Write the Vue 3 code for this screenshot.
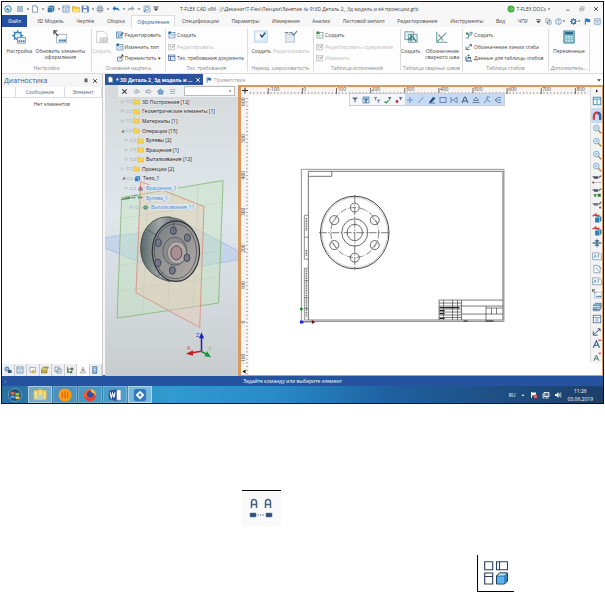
<script setup>
import { h } from 'vue'

const glyphs = {
  logo: '<circle cx="8" cy="8" r="6.5" fill="#fff" stroke="#2d8ac7" stroke-width="2"/><path d="M4 9l3-4 2 3 3-1-3 5z" fill="#2d8ac7"/>',
  menu: '<path d="M2 4h12M2 8h12M2 12h12" stroke="#34618f" stroke-width="1.6"/>',
  page: '<path d="M3 1.5h7l3 3v10H3z" fill="#fff" stroke="#55718f" stroke-width="1.3"/><path d="M10 1.5v3h3" fill="none" stroke="#55718f"/>',
  cube: '<path d="M2 5l3-3h9v9l-3 3H2z" fill="#2f7fb5" stroke="#1d4e78"/><path d="M2 5h9v9M11 5l3-3" fill="none" stroke="#bfe0f5"/>',
  form: '<rect x="2" y="2" width="12" height="12" fill="#fff" stroke="#3a6ea5" stroke-width="1.3"/><path d="M2 5.500h12M5 8h6M5 11h6" stroke="#3a6ea5"/>',
  folder: '<path d="M1 3h5l2 2h7v9H1z" fill="#f5c73d" stroke="#c59a2a"/><path d="M3 8h13l-2 6H1z" fill="#ffe27a"/>',
  tree: '<path d="M1 3h5l2 2h7v9H1z" fill="#f7d24d" stroke="#e0b638"/>',
  save: '<path d="M2 2h11l2 2v10H2z" fill="#6a8ecb" stroke="#35579a"/><path d="M5 2h6v4H5zM4 9h8v5H4z" fill="#fff"/>',
  print: '<path d="M4 2h8v4H4zM2 6h12v5H2zM4 10h8v4H4z" fill="#e8ecef" stroke="#566a80"/>',
  undo: '<path d="M6 2L1 7l5 5V9c4 0 6 0 9 3 0-5-4-7-9-7z" fill="#1f6fb0"/>',
  redo: '<path d="M10 2l5 5-5 5V9c-4 0-6 0-9 3 0-5 4-7 9-7z" fill="#9aa7b5"/>',
  preview: '<path d="M2 2h12v12H2z" fill="#fff" stroke="#56738e"/><circle cx="8" cy="7" r="3.500" fill="none" stroke="#2d78b5" stroke-width="1.5"/><path d="M5 10l-3 4" stroke="#2d78b5" stroke-width="2"/>',
  down: '<path d="M3 6h10l-5 6z" fill="#444"/>',
  more: '<path d="M3 4h10" stroke="#444" stroke-width="2"/><path d="M3 7h10l-5 5z" fill="#444"/>',
  ball: '<circle cx="8" cy="8" r="7" fill="#43ad3b"/><path d="M4 8h8M8 4l4 4-4 4" stroke="#b5e8ad" fill="none"/>',
  min: '<path d="M3 11h9" stroke="#444" stroke-width="2"/>',
  restore: '<path d="M5 2h9v7H5zM2 6h9v7H2z" fill="#fff" stroke="#777" stroke-width="1.3"/>',
  close: '<path d="M3 3l10 10M13 3L3 13" stroke="#333" stroke-width="2.300"/>',
  closeW: '<path d="M3 3l10 10M13 3L3 13" stroke="#fff" stroke-width="2.300"/>',
  help: '<circle cx="8" cy="8" r="6.500" fill="#fff" stroke="#3777b0" stroke-width="1.500"/><path d="M6 6c0-3 5-2 4 0L8 8v2M8 11v2" fill="none" stroke="#3777b0" stroke-width="1.400"/>',
  gear: '<circle cx="8" cy="8" r="4.500" fill="none" stroke="#376fa8" stroke-width="3"/><path d="M8 0v4M8 12v4M0 8h4M12 8h4M2 2l3 3M11 11l3 3M14 2l-3 3M2 14l3-3" stroke="#376fa8" stroke-width="2"/>',
  flag: '<path d="M3 1v14" stroke="#1b5faa" stroke-width="2"/><path d="M4 2c4-2 6 2 10 0v7c-4 2-6-2-10 0z" fill="#2c78c4"/>',
  layers: '<path d="M2 2h8v9H2zM6 6h8v8H6z" fill="#fff" stroke="#56728f" stroke-width="1.300"/>',
  settings: '<circle cx="6.500" cy="6.500" r="4" fill="#dff0fa" stroke="#3586bb" stroke-width="1.800"/><path d="M6.500 0v3M6.500 10v3M0 6.500h3M10 6.500h3M2 2l2 2M9 9l2 2M11 2L9 4M2 11l2-2" stroke="#3586bb" stroke-width="1.300"/><rect x="6" y="8.500" width="9.500" height="6.500" fill="#e6f0f8" stroke="#55738e" stroke-width=".7"/><path d="M7.500 12.800h1.800M10 12.800h1.800M12.500 12.800h1.800" stroke="#444" stroke-width="1.500"/>',
  update: '<path d="M4 5h11.500v9.500H4z" fill="#fff" stroke="#7d94a8" stroke-width=".8"/><path d="M6 10h9v4H6z" fill="#bbdcf0"/><path d="M7 12h1.800M10 12h1.800M12.500 12h1.800" stroke="#345b7c" stroke-width="1.500"/><path d="M1 1l5 6M1 5V1h4" fill="none" stroke="#444" stroke-width="1.200"/>',
  stamp: '<path d="M2 1.500h8l4 4v9H2z" fill="#fff" stroke="#bbb" stroke-width=".8"/><path d="M6 9h8v5H6zM6 11.500h8M10 9v5" fill="#ececec" stroke="#b5b5b5" stroke-width=".8"/>',
  edit: '<rect x="1" y="2" width="11" height="12" fill="#e3eef7" stroke="#3e6e9c" stroke-width="1.300"/><path d="M1 6h11M5 6v8" stroke="#3e6e9c"/><path d="M6 12l2-4 6-6 2 2-6 6z" fill="#3e7ebc"/>',
  move: '<path d="M3 6h9v8H3z" fill="#fff" stroke="#56728f" stroke-width="1.500"/><path d="M7 10l7-8M10 2h4v4" fill="none" stroke="#333" stroke-width="1.500"/>',
  create: '<rect x="2" y="3" width="12" height="11" fill="#fff" stroke="#4777a4" stroke-width="1.300"/><path d="M5 7h8M5 10h8" stroke="#4777a4"/><path d="M1 1h5v5H1z" fill="#2871ad"/>',
  editG: '<rect x="1" y="3" width="12" height="11" fill="#f5f5f5" stroke="#bbb" stroke-width="1.300"/><path d="M1 7h12M5 3v11" stroke="#bbb"/><path d="M8 10l6-7" stroke="#aaa" stroke-width="2"/>',
  doc: '<rect x="1" y="2" width="13" height="11" fill="#dfe9f5" stroke="#4662a0" stroke-width="1.300"/><path d="M1 5h13M5 5v8" stroke="#4662a0" stroke-width="1.500"/>',
  rough: '<rect x=".5" y="1" width="15" height="13" fill="#d8e9f8" stroke="#a9c8e4" stroke-width=".6"/><rect x="2" y="3" width="8" height="8" fill="#fff"/><path d="M7 5l2 3 4-5" fill="none" stroke="#294d82" stroke-width="1.700"/>',
  roughG: '<path d="M2 5h10v9H2z" fill="#e4eaf0" stroke="#a9b7c5" stroke-width=".8"/><path d="M1 3h4M6 3h3M9 3l2 3 4-5" fill="none" stroke="#6e829b" stroke-width="1.400"/>',
  createG: '<rect x="2" y="3" width="12" height="11" fill="#fff" stroke="#71907d" stroke-width="1.300"/><path d="M2 9h12M7 3v11" stroke="#a2b8aa"/><path d="M1 1h6v5H1z" fill="#438c4c"/>',
  weld: '<path d="M1 2h10v9H1zM5 5h10v9H5z" fill="#e3f1f0" stroke="#68979a" stroke-width="1"/><path d="M5 11l4-4 5 6M8 5v8" fill="none" stroke="#2f7f84" stroke-width="1.500"/>',
  weldMark: '<path d="M2 2v12h12M3 13L13 3M4 5l5 7" fill="none" stroke="#699b91" stroke-width="1.300"/>',
  bend: '<path d="M2 14h5V5l7-3v5L8 9" fill="#dbe9e0" stroke="#3d6b80" stroke-width="1.400"/><path d="M2 3h4v4H2z" fill="#338248"/>',
  bendLine: '<path d="M2 7v6h7M3 12L13 3M9 3h4v4" fill="none" stroke="#354f6d" stroke-width="1.500"/>',
  bendData: '<path d="M2 5v9h12M6 11V7h5v4" fill="none" stroke="#2c5577" stroke-width="2"/><circle cx="7" cy="3" r="2" fill="#338248"/>',
  calc: '<rect x="2" y="1" width="12" height="14" fill="#77b8c9" stroke="#3e7f98" stroke-width=".8"/><rect x="3.500" y="2.500" width="9" height="2.500" fill="#235f88"/><path d="M4 7.500h8M4 10h8M4 12.500h8" stroke="#e9f7fa" stroke-width="1.300" stroke-dasharray="2 1"/>',
  pin: '<path d="M5 2h6v7H5zM3 9h10M8 9v5" fill="#777" stroke="#444" stroke-width="1.300"/>',
  left: '<path d="M8 3L2 8l5 5v-3h7V6H8z" fill="#e8edf1" stroke="#63798d" stroke-width="1.200"/>',
  right: '<path d="M8 3l6 5-5 5v-3H2V6h6z" fill="#e8edf1" stroke="#63798d" stroke-width="1.200"/>',
  play: '<path d="M4 2l8 6-8 6z" fill="#111"/>',
  home: '<path d="M1 8l7-6 7 6-2 1v5H4V9z" fill="#78a9d6" stroke="#2f6aa3" stroke-width="1.200"/>',
  list: '<path d="M2 4h12M2 8h12M2 12h12" stroke="#7a8794" stroke-width="1.300"/>',
  body: '<path d="M2 5l4-3h8v8l-3 4H2z" fill="#347ec0"/><path d="M2 5h8l4-3M10 5v9" fill="none" stroke="#a8d8fb" stroke-width="1.300"/>',
  rotate: '<path d="M3 13V9l3-5 4 0 3 5v4z" fill="#7c94a3"/><path d="M3 7h10M8 1v14" stroke="#c56" stroke-width="1"/>',
  bool: '<path d="M2 4l8 3-7 5z" fill="#579a68"/><path d="M9 5l5 3-5 3z" fill="#4b86c9"/>',
  extrude: '<path d="M1 8l7-6 7 6-7 6z" fill="#42866f"/><path d="M8 2v12M1 8h14" stroke="#bbdf88"/>',
  funnel: '<path d="M2 3h12l-5 5v5l-2-1V8z" fill="#596b80"/>',
  funnelBox: '<rect x="2" y="2" width="12" height="12" fill="#d7e6f8" stroke="#3e6da5" stroke-width="1.300"/><path d="M2 4h12M4 6h8l-3 3v4H7V9z" fill="#4774a5" stroke="#3e6da5"/>',
  funnels: '<path d="M1 2h8L6 5v4L4 8V5zM7 7h8l-3 3v4l-2-1v-3z" fill="#6d82a5"/>',
  pickOn: '<path d="M8 2h7l-3 4v3l-2-1V6z" fill="#596b80"/><path d="M1 11l3 3 5-5" fill="none" stroke="#2d9a45" stroke-width="2.200"/>',
  pickOff: '<path d="M8 2h7l-3 4v3l-2-1V6z" fill="#596b80"/><circle cx="4" cy="11" r="2.800" fill="#d1302e"/>',
  plus: '<path d="M8 2v12M2 8h12" stroke="#7590b5" stroke-width="2"/>',
  line: '<path d="M3 14L13 2" stroke="#6484b0" stroke-width="1.600"/>',
  pencil: '<path d="M3 12L11 2l3 3-8 8zM2 14h12" fill="#244b78" stroke="#244b78" stroke-width="1.500"/>',
  rect: '<rect x="2" y="3" width="12" height="10" fill="none" stroke="#49698f" stroke-width="1.500"/>',
  dim: '<path d="M2 2v12M14 2v12M2 8h5l6-5M7 8l6 5" fill="none" stroke="#49698f" stroke-width="1.400"/>',
  letter: '<path d="M2 14L7 2h2l5 12M4 10h8" fill="none" stroke="#354e71" stroke-width="1.900"/>',
  tri: '<path d="M3 9L8 2l5 7zM1 13h14" fill="none" stroke="#49698f" stroke-width="1.500"/>',
  leader: '<path d="M2 14l6-7 6 5M8 7V2h5" fill="none" stroke="#49698f" stroke-width="1.600"/>',
  hatch: '<path d="M7 3h7M4 8h10M7 13h7M2 8l5-5M2 8l5 5" fill="none" stroke="#49698f" stroke-width="1.500"/>',
  table: '<rect x="2" y="2" width="12" height="12" fill="#eef7fc" stroke="#4387a8" stroke-width="1.400"/><path d="M2 5h12M8 5v9" stroke="#4387a8" stroke-width="1.300"/>',
  magnet: '<path d="M3 14V8c0-7 10-7 10 0v6" fill="none" stroke="#d43d3d" stroke-width="3.600"/><path d="M8 2.800c3 0 5 2 5 5.200v6" fill="none" stroke="#2b67b0" stroke-width="3.600"/>',
  zoom: '<circle cx="7" cy="6.500" r="4.500" fill="#e7f3fb" stroke="#7aa3c4" stroke-width="1.500"/><path d="M5 6.500h4M7 4.500v4" stroke="#7698b5"/><path d="M10 10l5 5" stroke="#ac9468" stroke-width="2.400"/>',
  snapA: '<path d="M1 3h9M11 4l4-3M3 5h7" stroke="#4c535a" stroke-width="1.800"/><path d="M2 12h13" stroke="#999" stroke-width="1"/><circle cx="2" cy="12" r="1.700" fill="#bf3550"/>',
  snapB: '<path d="M1 3h9M11 4l4-3M3 5h7" stroke="#4c535a" stroke-width="1.800"/><path d="M2 10l3 5 3-5zM9 9h5v5H9z" fill="#33803b"/>',
  snapC: '<path d="M1 6h9M11 7l4-4M3 8h7" stroke="#4c535a" stroke-width="1.800"/><circle cx="13" cy="12" r="1.700" fill="#565656"/>',
  redCube: '<path d="M5 7l3-2h7v7l-3 3H5z" fill="#2d7eac"/><path d="M5 7h7v8M12 7l3-2" fill="none" stroke="#b8e0ef"/><path d="M1 5l5-3v2h6" fill="none" stroke="#d83735" stroke-width="2.300"/>',
  split: '<path d="M1 8h14" stroke="#315b87" stroke-width="2"/><path d="M8 1v4M8 11v4M5 4h6l-3 3zM5 12h6l-3-3z" fill="#315b87" stroke="#315b87"/>',
  frame: '<path d="M1 3h11l3 3v8H1z" fill="#fff" stroke="#6d91ac" stroke-width="1.200"/><path d="M3 11l2-5 2 5M9 6h3M10 6v5" fill="none" stroke="#4e86aa" stroke-width="1.200"/>',
  sheet: '<path d="M3 2h5l5 4v8H3z" fill="#fff" stroke="#6b91a9" stroke-width="1.200"/><path d="M6 5l6 8M10 2l5 5" stroke="#6b91a9" stroke-width="1.200"/>',
  stack: '<path d="M2 5l4-3h9l-3 4H2zM2 9l10 0 3-5v3l-3 5H2zM2 12v2h10l3-5" fill="#85adc6" stroke="#476f8c"/>',
  fontUp: '<path d="M2 14L7 3l5 11M4 10h6" fill="none" stroke="#355b83" stroke-width="1.800"/><path d="M10 1h5v2h-5z" fill="#d83b46"/>',
  fontDown: '<path d="M3 14L7 5l4 9M4 11h6" fill="none" stroke="#3f7a68" stroke-width="1.500"/><path d="M10 1h5l-2.500 3z" fill="#d83b46"/>',
  warn: '<path d="M8 2l6 12H2z" fill="#f5f5f5" stroke="#858585"/><path d="M8 6v4M8 11v2" stroke="#333" stroke-width="1.500"/>',
  props: '<circle cx="6" cy="6" r="4" fill="#9ac5e8" stroke="#33567c" stroke-width="1.400"/><path d="M8 8h7v6H8z" fill="#31577e"/>',
  gold: '<path d="M2 3h11v9H2z" fill="#fff" stroke="#55718e"/><path d="M7 7h3v3h3v3h-3v2H7v-2H4v-3h3z" fill="#e3b524"/>',
  lib: '<path d="M1 6l4-4h10l-3 5v7H1z" fill="#c4ab52" stroke="#5c583a"/><path d="M1 6h11" stroke="#fff"/>',
  links: '<path d="M3 2v11h4M3 6h7M10 4h4v4h-4zM8 11h4v3H8z" fill="#7ba36a" stroke="#4e6546" stroke-width="1.300"/>',
  docs: '<path d="M3 1h9v14H3z" fill="#7fa6cd" stroke="#456b94"/><path d="M5 4h5M5 7h5M5 10h5" stroke="#fff"/>',
  win: '<circle cx="8" cy="8" r="7.500" fill="#24517a" stroke="#87b4cf" stroke-width=".8"/><path d="M3 5c2-1 3-1 4.500 0v3C6 7 4.500 7 3 8z" fill="#ef6a35"/><path d="M8.500 5c2 1 3 1 4.500 0v3c-1.500 1-3 1-4.500 0z" fill="#8fc847"/><path d="M3 9c2-1 3-1 4.500 0v3C6 11 4.500 11 3 12z" fill="#4ab0e8"/><path d="M8.500 9c2 1 3 1 4.500 0v3c-1.500 1-3 1-4.500 0z" fill="#f7cf45"/>',
  files: '<path d="M1 3h5v10H1zM6 2h5v11H6zM11 3h4v10h-4z" fill="#f4df8a" stroke="#d8b754"/><path d="M4 8h8v6H4z" fill="#a7d1e8" opacity=".8"/>',
  orange: '<circle cx="8" cy="8" r="7.500" fill="#ff9b16"/><path d="M5 5v6M8 4v8M11 5v6" stroke="#d96b00" stroke-width="1.500"/>',
  fox: '<circle cx="8" cy="8" r="7" fill="#f0642b"/><circle cx="8.500" cy="7" r="4" fill="#344b9f"/><path d="M1 6c0 4 3 5 6 5 4 0 6-2 7-6 2 6-2 10-6 10S1 12 1 6z" fill="#e8402c"/><path d="M9 1c4 1 6 4 5.500 8-1-3-3-4-5-4z" fill="#ffc53a"/>',
  word: '<path d="M5 2h10v12H5z" fill="#fff" stroke="#6180b0"/><path d="M1 3l9-2v14l-9-2z" fill="#2c559d"/><path d="M2.500 5l1.200 6 1.600-5 1.500 5L8 5" fill="none" stroke="#fff" stroke-width="1.200"/>',
  flex: '<rect x="1" y="1" width="14" height="14" rx="3" fill="#3277bd"/><path d="M8 3l5 5-5 5-5-5z" fill="#fff"/><path d="M8 6l2 2-2 2-2-2z" fill="#3277bd"/>',
  up: '<path d="M4 10h8L8 6z" fill="#fff"/>',
  trayFlag: '<path d="M3 2v12" stroke="#fff" stroke-width="1.800"/><path d="M4 3h8v6H4z" fill="#fff"/><circle cx="11" cy="11" r="4" fill="#d93a3a"/><path d="M9 9l4 4M13 9l-4 4" stroke="#fff"/>',
  net: '<path d="M4 3h10v8H4zM7 14h6" fill="#5b7894" stroke="#fff" stroke-width="1.700"/><path d="M2 5v9h3" fill="none" stroke="#fff" stroke-width="1.500"/>',
  sound: '<path d="M2 6h3l4-4v12l-4-4H2z" fill="#fff"/><path d="M11 5v6M13.500 3v10" stroke="#fff" stroke-width="1.300"/>',
  textLink: '<path d="M2.500 10V4.500Q2.500 1.500 5 1.500T7.500 4.500V10M2.500 6.500h5M16.500 10V4.500q0-3 2.500-3t2.500 3V10M16.500 6.500h5" fill="none" stroke="#456282" stroke-width="1.500"/><path d="M1 15h6v4H1zM17 15h6v4h-6z" fill="#2c4b70" stroke="#6f8aa8" stroke-width=".6"/><path d="M8.500 17h7" stroke="#2c4b70" stroke-width="1" stroke-dasharray="1.200 1.300"/>',
  views: '<path d="M.7.700h8v8h-8zM12.500.700h11v8h-11zM15.500.700v8M.7 12h8v11h-8zM.7 15.500h8" fill="#fff" stroke="#2d4059" stroke-width="1.100"/><path d="M12.500 15l3-3h8v8l-3 3h-8z" fill="#3188c7" stroke="#1b3b5b" stroke-width="1"/><path d="M12.500 15l3-3h8l-3 3z" fill="#bfe3f8" stroke="#1b3b5b" stroke-width=".7"/><path d="M13 15.500h7V22.500h-7z" fill="#5db4ee"/>'
}

const Icon = (props) => h('svg', {
  viewBox: props.box || '0 0 16 16',
  'aria-hidden': 'true',
  innerHTML: glyphs[props.name]
})
Icon.props = ['name', 'box']

const quick = ['menu', 'page', 'cube', 'form', 'folder', 'save', 'print', 'undo', 'redo', 'preview', 'more']
const withArrow = ['menu', 'page', 'cube', 'save', 'print', 'undo', 'redo']
const tabs = ['3D Модель', 'Чертёж', 'Сборка', 'Оформление', 'Спецификации', 'Параметры', 'Измерение', 'Анализ', 'Листовой металл', 'Редактирование', 'Инструменты', 'Вид', 'ЧПУ']
const tabTools = ['more', 'layers', 'help', 'gear', 'flag', 'form']
const groups = [
  { name: 'Настройки', big: [['settings', 'Настройка'], ['update', 'Обновить элементы оформления']] },
  { name: 'Основная надпись', big: [['stamp', 'Создать', true]], small: [['edit', 'Редактировать'], ['create', 'Изменить тип'], ['move', 'Переместить ▾']] },
  { name: 'Тех. требования', small: [['create', 'Создать'], ['editG', 'Редактировать', true], ['doc', 'Тех. требования документа']] },
  { name: 'Нерезд. шероховатость', big: [['rough', 'Создать'], ['roughG', 'Редактировать', true]] },
  { name: 'Таблица исполнений', small: [['createG', 'Создать'], ['editG', 'Редактировать содержимое', true], ['editG', 'Изменить', true]] },
  { name: 'Таблица сварных швов', big: [['weld', 'Создать'], ['weldMark', 'Обозначение сварного шва']] },
  { name: 'Таблица сгибов', small: [['bend', 'Создать'], ['bendLine', 'Обозначение линии сгиба'], ['bendData', 'Данные для таблицы сгибов']] },
  { name: 'Дополнитель...', big: [['calc', 'Переменные']] }
]
const tree = [
  { t: '3D Построения [12]', i: 'tree', d: 0 },
  { t: 'Геометрические элементы [1]', i: 'tree', d: 0 },
  { t: 'Материалы [1]', i: 'tree', d: 0 },
  { t: 'Операции [15]', i: 'tree', d: 0, open: true },
  { t: 'Булевы [2]', i: 'tree', d: 1 },
  { t: 'Вращения [1]', i: 'tree', d: 1 },
  { t: 'Выталкивания [12]', i: 'tree', d: 1 },
  { t: 'Проекции [2]', i: 'tree', d: 0 },
  { t: 'Тело_1', i: 'body', d: 2, open: true },
  { t: 'Вращение_1', i: 'rotate', d: 1, link: true },
  { t: 'Булева_1', i: 'bool', d: 1, link: true },
  { t: 'Выталкивания_11', i: 'extrude', d: 3, link: true }
]
const filters = ['funnel', 'funnelBox', 'funnels', 'pickOn', 'pickOff']
const picks = ['plus', 'line', 'pencil', 'rect', 'dim', 'letter', 'tri', 'leader', 'hatch']
const side = ['table', 'magnet', 'zoom', 'zoom', 'zoom', 'zoom', 'snapA', 'snapB', 'snapC', 'redCube', 'redCube', 'split', 'frame', 'sheet', 'frame', 'update', 'stack', 'form', 'bendLine', 'fontUp', 'fontDown']
const panes = ['props', 'form', 'gold', 'lib', 'layers', 'links', 'warn', 'docs']
const apps = ['files', 'orange', 'fox', 'word', 'flex']
const marksX = [-100, 0, 100, 200, 300, 400, 500, 600, 700, 800].map((v) => ({ v, x: 301.5 + v * 0.342 }))
const marksY = [600, 500, 400, 300, 200, 100, 0, -100].map((v) => ({ v, y: 321.5 - v * 0.368 }))
const ticksX = Array.from({ length: 100 }, (_, i) => 249.5 + i * 3.42).filter((x) => x < 588)
const ticksY = Array.from({ length: 80 }, (_, i) => 97.5 + i * 3.68).filter((y) => y < 374)
const holes = [[354, 206.800], [374, 219.400], [374, 244.400], [354, 257], [333.500, 244.400], [333.500, 219.400]]
const holes3d = [[173.500, 230], [187.500, 237], [158.500, 242], [187, 257], [158, 262], [172.500, 269.500]]
</script>

<template>
  <main class="doc">
    <section class="app">
      <header class="title">
        <Icon name="logo" class="logo" />
        <div class="quick">
          <button v-for="q in quick" :key="q" :aria-label="q"><Icon :name="q" class="i8" /><Icon v-if="withArrow.includes(q)" name="down" class="i4" /></button>
        </div>
        <h1>T-FLEX CAD x86 - J:\Деканат\T-Flex\Лекции\Занятие № 9\3D Деталь 2_ 3д модель и её проекции.grb</h1>
        <button class="docs"><Icon name="ball" class="i8" />T-FLEX DOCs<Icon name="down" class="i4" /></button>
        <div class="win"><button aria-label="min"><Icon name="min" class="i6" /></button><button aria-label="restore"><Icon name="restore" class="i6" /></button><button aria-label="close"><Icon name="close" class="i6" /></button></div>
      </header>
      <div class="tabs">
        <button class="file">Файл</button>
        <nav><button v-for="t in tabs" :key="t" :class="{ on: t === 'Оформление' }">{{ t }}</button></nav>
        <div class="tabtools"><button v-for="t in tabTools" :key="t" :aria-label="t"><Icon :name="t" class="i7" /><Icon v-if="t === 'help' || t === 'gear'" name="down" class="i4" /></button></div>
      </div>
      <div class="ribbon">
        <section v-for="g in groups" :key="g.name" class="group">
          <div class="cmds">
            <button v-for="b in g.big" :key="b[1]" class="big" :class="{ off: b[2] }"><Icon :name="b[0]" class="i14" /><span>{{ b[1] }}</span></button>
            <div v-if="g.small" class="smalls">
              <button v-for="s in g.small" :key="s[1]" :class="{ off: s[2] }"><Icon :name="s[0]" class="i8" />{{ s[1] }}</button>
            </div>
          </div>
          <h2>{{ g.name }}</h2>
        </section>
      </div>
      <div class="work">
        <aside class="diag">
          <header><h2>Диагностика</h2><button aria-label="pin"><Icon name="pin" class="i6" /></button><button aria-label="close"><Icon name="close" class="i6" /></button></header>
          <table><thead><tr><th></th><th>Сообщение</th><th>Элемент</th></tr></thead><tbody><tr><td colspan="3">Нет элементов</td></tr></tbody></table>
          <footer><button v-for="p in panes" :key="p" :aria-label="p" :class="{ on: p === 'warn' }"><Icon :name="p" class="i8" /></button></footer>
        </aside>
        <div class="right">
          <div class="doctabs">
            <button class="active"><Icon name="page" class="i7" /><b>* 3D Деталь 2_ 3д модель и ...</b><Icon name="closeW" class="i6" /></button>
            <button class="hello"><Icon name="flag" class="i6" />Приветствие</button>
            <Icon name="down" class="i6 end" />
          </div>
          <div class="views">
            <section class="model">
              <svg class="scene" viewBox="105 85 133 290" preserveAspectRatio="xMidYMin slice">
                <defs>
                  <linearGradient id="metal"><stop offset="0" stop-color="#596669" /><stop offset=".5" stop-color="#a2aaa9" /><stop offset="1" stop-color="#555c62" /></linearGradient>
                  <linearGradient id="face" x2="1" y2="1"><stop offset="0" stop-color="#777e83" /><stop offset="1" stop-color="#b5ada7" /></linearGradient>
                </defs>
                <path d="M105 237l85-12 48 25v9l-73 12-60-24z" fill="#aac4ee" fill-opacity=".45" stroke="#9ab8e6" stroke-width=".7" />
                <path d="M122 197l101-17-4.500 122-101 15z" fill="#bfe6b8" fill-opacity=".38" stroke="#82b578" stroke-width=".8" />
                <path d="M141 181l63 25-4.300 120.300-63.400-34.600z" fill="#efc9b2" fill-opacity=".38" stroke="#d98879" stroke-width=".8" />
                <path d="M120 218l102-16M119 265l101-15M118 290l101-14M148 193l-5 120M173 189l-5 121M198 185l-5 121" fill="none" stroke="#8ba99c" stroke-opacity=".25" stroke-width=".6" />
                <path d="M122 199l14-2M122 199l15-4" stroke="#518b4a" stroke-width="1" />
                <path d="M171 216.500c-16-2-30 10-30 31 0 17 11 29 29 33l10-58z" fill="url(#metal)" stroke="#303638" stroke-width=".8" />
                <path d="M171 216.500c8 0 16 4 22 12l-12 5z" fill="#6d7679" />
                <ellipse cx="176" cy="250.500" rx="23.500" ry="30" fill="url(#face)" stroke="#2e3439" stroke-width="1.200" />
                <ellipse cx="175.500" cy="250.500" rx="21" ry="27.300" fill="none" stroke="#4d5358" stroke-width=".8" />
                <ellipse cx="175" cy="250.500" rx="12" ry="14" fill="#898b8d" stroke="#515459" stroke-width=".8" />
                <ellipse cx="177" cy="252" rx="9.500" ry="11" fill="#b2acaa" stroke="#62656a" stroke-width=".7" />
                <ellipse cx="176.500" cy="252" rx="5.500" ry="7" fill="#a98f93" stroke="#4c3f4b" stroke-width=".9" />
                <ellipse v-for="p in holes3d" :key="p[0]" :cx="p[0]" :cy="p[1]" rx="3" ry="3.800" fill="#74788d" stroke="#3b3f4a" stroke-width=".9" />
                <path d="M174 220v14M148 229l12 8M164 271l-8 5" stroke="#444b50" stroke-width=".6" />
                <path d="M201.500 350v-14" stroke="#1c22b8" stroke-width="1.500" /><path d="M199 337h5l-2.500-6z" fill="#1c22b8" />
                <path d="M201 350l-10 1.700" stroke="#c51f1f" stroke-width="1.500" /><path d="M193 349v5.500l-7-2z" fill="#c51f1f" />
                <path d="M201 350l5 2.700" stroke="#17973c" stroke-width="1.500" /><path d="M207 350l-2.500 5 6.500 1z" fill="#17973c" />
                <g font-size="6"><text x="196" y="336" fill="#2c35c9">Z</text><text x="187" y="349" fill="#d33">X</text><text x="208" y="350" fill="#6cb87a">Y</text></g>
              </svg>
              <div class="over">
                <div class="bar">
                  <button v-for="b in ['close', 'left', 'right', 'home', 'list']" :key="b" :aria-label="b"><Icon :name="b" class="i7" /></button>
                  <label class="pick"><select aria-label="filter"><option></option></select><Icon name="down" class="i4" /></label>
                </div>
                <ul class="tree">
                  <li v-for="n in tree" :key="n.t" :class="['d' + n.d, { link: n.link }]">
                    <span class="tw">{{ n.open ? '◢' : '▷' }}</span><i></i><Icon :name="n.i" class="i7" /><span class="name">{{ n.t }}</span>
                  </li>
                </ul>
              </div>
            </section>
            <section class="sheet">
              <svg class="drawing" viewBox="240 86 350 289" preserveAspectRatio="xMinYMin slice">
                <path d="M240 86h350v8H248v281h-8z" fill="#f8f4f1" />
                <path v-for="x in ticksX" :key="'x' + x" :d="`M${x} 91v2`" stroke="#777" stroke-width=".6" />
                <path v-for="y in ticksY" :key="'y' + y" :d="`M245 ${y}h2`" stroke="#777" stroke-width=".6" />
                <g fill="#444" font-size="5">
                  <g v-for="m in marksX" :key="'a' + m.v"><path :d="`M${m.x} 87v6`" stroke="#333" stroke-width=".7" /><text :x="m.x + 1" y="90.500">{{ m.v }}</text></g>
                  <text v-for="m in marksY" :key="'b' + m.v" :transform="`translate(244.500 ${m.y}) rotate(-90)`" text-anchor="middle">{{ m.v }}</text>
                </g>
                <path d="M241 89.500h6M244 86.500v6" stroke="#222" stroke-width="1" />
                <path d="M241.500 371l3-2v4z" fill="#111" />
                <g fill="none" stroke="#666" stroke-width=".7">
                  <path d="M300.500 168.500h203v152.500h-203z" />
                  <path d="M307.500 170.500h195v149h-195zM307.500 175.500h23.500v-5" stroke-width=".9" />
                  <path d="M307.500 214.500h-4v44h4M303.500 236.500h4M307.500 267.500h-4v52h4M303.500 280h4M303.500 297h4M303.500 308h4" />
                  <path d="M305.500 217v13M305.500 249v6M305.500 269v48" stroke-dasharray="1 .7" stroke-width="1.500" />
                  <ellipse cx="354" cy="231.800" rx="34.300" ry="36.400" stroke="#444" stroke-width="1" />
                  <ellipse cx="354" cy="231.800" rx="33" ry="35" stroke="#999" stroke-width=".5" />
                  <ellipse cx="354" cy="231.800" rx="24" ry="25" stroke-dasharray="6 1.500 1 1.500" stroke-width=".8" />
                  <ellipse cx="354" cy="231.800" rx="13" ry="13.700" stroke="#444" stroke-width=".8" />
                  <ellipse cx="354" cy="231.800" rx="7.700" ry="8.200" stroke="#444" stroke-width=".8" />
                  <path d="M318 232h72M354 194v75.500" stroke="#444" stroke-dasharray="8 1.500 1.500 1.500" stroke-width=".7" />
                  <circle v-for="c in holes" :key="c[0] + '-' + c[1]" :cx="c[0]" :cy="c[1]" r="4.500" stroke="#444" stroke-width=".8" />
                  <path d="M371 216.500l6 6M371 247.500l6-6M336.500 216.500l-6 6M336.500 247.500l-6-6" />
                  <path d="M438.500 319.500v-20h64M461 299.500v20M443 299.500v20M452 299.500v20M457 299.500v20M438.500 302.500H461M438.500 305.500h64M438.500 308.500H461M438.500 311.500H461M438.500 314.500H461M438.500 317H461M485.500 305.500v14M485.500 307.500h17M485.500 313.500h17M461 313.500h24.500M491 307.500v6M496 307.500v6" stroke="#444" />
                  <path d="M439 307h20M439 310h5M439 313h5M439 318h5M463 320.500h4M485 320.500h8" stroke="#222" stroke-width="1.200" />
                </g>
                <path d="M299 320h3.500v3H299z" fill="#2222d8" /><path d="M302 321.500h10" stroke="#655" stroke-width=".7" /><path d="M311 319.500l3.500 2-3.500 2z" fill="#621717" /><circle cx="300.500" cy="308.500" r="1.500" fill="#0c8a1d" />
              </svg>
              <div class="filter">
                <button v-for="f in filters" :key="f" :aria-label="f"><Icon :name="f" class="i8" /></button>
                <button v-for="f in picks" :key="f" class="sel" :aria-label="f"><Icon :name="f" class="i8" /></button>
              </div>
              <div class="side">
                <Icon name="play" class="i4" />
                <button v-for="(s, n) in side" :key="n" :aria-label="s" :class="{ sel: s === 'magnet', tall: n < 2 }"><Icon :name="s" class="i10" /></button>
              </div>
            </section>
          </div>
        </div>
      </div>
      <div class="status"><span>»</span><p>Задайте команду или выберите элемент</p></div>
      <footer class="taskbar">
        <button class="start" aria-label="start"><Icon name="win" class="i14" /></button>
        <button v-for="a in apps" :key="a" class="task" :class="{ lit: a === 'files' || a === 'flex' }" :aria-label="a"><Icon :name="a" class="i14" /></button>
        <div class="tray"><span>RU</span><Icon name="up" class="i6" /><Icon name="trayFlag" class="i8" /><Icon name="net" class="i8" /><Icon name="sound" class="i8" /></div>
        <time>11:26<br>03.06.2019</time>
      </footer>
    </section>
    <figure class="fig one"><Icon name="textLink" box="0 0 24 20" /></figure>
    <figure class="fig two"><Icon name="views" box="0 0 24 24" /></figure>
  </main>
</template>

<style>
body { margin: 0; background: #fff; }
</style>

<style scoped>
* { box-sizing: border-box; }
.doc { font: 5px/6px "Open Sans", "Noto Sans", sans-serif; color: #444; padding-top: 1px; }
button { font: inherit; color: inherit; border: 0; padding: 0; margin: 0; background: none; display: flex; align-items: center; justify-content: center; white-space: nowrap; }
h1, h2, p, ul, figure { margin: 0; padding: 0; font: inherit; }
svg { display: block; flex: none; }
.i4 { width: 4px; height: 4px; }
.i6 { width: 6px; height: 6px; }
.i7 { width: 7px; height: 7px; }
.i8 { width: 8px; height: 8px; }
.i10 { width: 10px; height: 10px; }
.i14 { width: 14px; height: 14px; }
.app { border: 1px solid #111; margin: 0 1px; background: #f7f7f8; }
.title { display: flex; align-items: center; height: 13px; padding: 0 4px 0 2px; }
.logo { width: 8px; height: 8px; }
.quick { display: flex; justify-content: space-between; width: 144px; margin-left: 4px; }
.quick button { gap: 2px; }
.title h1 { flex: 1; margin-left: 20px; white-space: nowrap; }
.docs { gap: 1px; margin-right: 14px; }
.win { display: flex; gap: 8px; }
.tabs { display: flex; align-items: stretch; height: 12px; }
.file { width: 25px; background: #2450a0; color: #fff; }
.tabs nav { flex: 1; display: flex; justify-content: space-between; padding-left: 4px; margin-right: 1px; }
.tabs nav button { padding: 0 6px; }
.tabs nav .on { background: #fff; color: #2a5699; border: 1px solid #ddd; border-width: 1px 1px 0; padding: 0 5px; }
.tabtools { display: flex; justify-content: space-between; width: 68px; padding-right: 2px; }
.ribbon { display: grid; grid-template-columns: 90fr 74fr 82fr 66fr 87fr 62fr 86fr 41fr 13fr; height: 47px; background: #fdfdfd; border-bottom: 1px solid #ddd; }
.group { display: flex; flex-direction: column; border-right: 1px solid #ddd; margin: 2px 0; min-width: 0; }
.cmds { flex: 1; display: flex; justify-content: center; gap: 2px; }
.big { flex-direction: column; justify-content: flex-start; gap: 4px; white-space: normal; padding-top: 1px; }
.big span { max-width: 52px; }
.off { color: #bbb; }
.smalls { flex: 1; display: flex; flex-direction: column; justify-content: space-between; padding: 2px 2px 1px; }
.smalls button { justify-content: flex-start; gap: 1px; }
.group h2 { text-align: center; color: #888; white-space: nowrap; padding-top: 2px; }
.work { display: grid; grid-template-columns: 101fr 500fr; height: 301px; }
.diag { display: flex; flex-direction: column; background: #fff; border-right: 1px solid #ccc; }
.diag header { display: flex; align-items: center; gap: 3px; height: 13px; padding: 0 4px 0 2px; background: #f5f5f6; }
.diag h2 { flex: 1; font-size: 7px; color: #335b8d; }
.diag table { border-collapse: collapse; width: 100%; }
.diag th { height: 10px; font-weight: 400; padding: 0; border: 1px solid #ddd; border-top: 0; border-left: 0; color: #567; }
.diag th:first-child { width: 13px; }
.diag td { text-align: center; height: 14px; }
.diag footer { margin-top: auto; display: flex; background: #eceef1; }
.diag footer button { flex: 1; height: 12px; border-right: 1px solid #ccc; }
.diag footer .on { background: #fff; }
.right { display: flex; flex-direction: column; padding-left: 2px; min-width: 0; }
.doctabs { display: flex; align-items: stretch; height: 11px; background: #fff; }
.active { width: 98px; padding: 0 2px; background: #2a539b; color: #fff; gap: 2px; }
.active b { flex: 1; text-align: left; }
.hello { gap: 2px; margin-left: 3px; color: #999; }
.end { margin: 3px 1px 0 auto; }
.views { flex: 1; display: grid; grid-template-columns: 133fr 366fr; min-height: 0; }
.model { display: grid; background: linear-gradient(#d6dadc, #dfe7eb 45%, #c8cccf); min-height: 0; overflow: hidden; }
.model > * { grid-area: 1 / 1; }
.scene { width: 100%; height: 100%; }
.over { z-index: 1; padding-left: 13px; }
.bar { display: flex; align-items: center; gap: 5px; height: 12px; background: #eff0f1; padding: 0 3px; }
.pick { flex: 1; display: grid; align-items: center; margin-left: 3px; }
.pick > * { grid-area: 1 / 1; }
.pick svg { justify-self: end; margin-right: 3px; pointer-events: none; }
.pick select { appearance: none; width: 100%; height: 10px; padding: 0; border: 1px solid #bbb; border-radius: 0; background: #fff; }
.tree { list-style: none; display: grid; grid-template-rows: repeat(12, 1fr); height: 115px; }
.tree li { display: flex; align-items: center; gap: 1px; padding-left: 3px; color: #222; }
.tree .d1 { padding-left: 7px; }
.tree .d2 { padding-left: 4px; }
.tree .d3 { padding-left: 12px; }
.tree i { width: 6px; height: 3px; border: 1px solid #c4c9cd; }
.tw { width: 4px; font-size: 4px; color: #777; }
.name { background: #dfe1e2; padding: 0 1px; white-space: nowrap; }
.link .name { color: #4d8edb; background: #dce5ec; }
.sheet { display: grid; grid-template-columns: 1fr 12px; grid-template-rows: 1fr; border: 2px solid #d9995f; border-width: 2px 1px 1px 3px; background: #fff; min-height: 0; }
.drawing { grid-area: 1 / 1; width: 100%; height: 100%; min-height: 0; }
.filter { grid-area: 1 / 1; align-self: start; justify-self: start; display: flex; margin: 6px 0 0 108px; border: 1px solid #ccd; background: #f4f6f9; }
.filter button { width: 11px; height: 11px; }
.sel { background: #c5dbf5; }
.side { grid-area: 1 / 2; display: flex; flex-direction: column; align-items: center; background: #f3f3f4; border-left: 1px solid #ddd; margin-bottom: 12px; padding-top: 2px; }
.side button { width: 11px; flex: 1 1 0; min-height: 0; }
.side .tall { flex: 0 0 15px; }
.status { display: flex; align-items: center; height: 11px; background: #2653a0; color: #fff; padding-left: 2px; }
.status span { width: 20px; color: #8ab; }
.status p { flex: 1; text-align: center; margin-right: 42px; }
.taskbar { display: flex; align-items: center; height: 17px; gap: 1px; color: #fff; background: linear-gradient(90deg, #2a6f9f, #2f9bd0 28%, #278cc8 45%, #1f5f9f 65%, #1d3f68); }
.start { width: 25px; }
.task { width: 24px; height: 17px; background: rgba(255, 255, 255, .15); border: 1px solid rgba(255, 255, 255, .2); }
.task.lit { background: rgba(255, 255, 255, .35); border-color: rgba(255, 255, 255, .4); }
.tray { margin-left: auto; display: flex; align-items: center; gap: 4px; }
.taskbar time { text-align: center; line-height: 8px; margin: 0 10px 0 5px; }
.fig { background: #f9f9fa; }
.one { width: 39px; height: 37px; margin: 86px 0 0 242px; border-top: 1px solid #000; padding: 7px 7px; }
.one svg { width: 24px; height: 20px; }
.two { width: 37px; height: 37px; margin: 28px 0 0 477px; border: solid #000; border-width: 0 0 1px 1px; padding: 6px; background: #fff; }
.two svg { width: 24px; height: 24px; }
</style>
